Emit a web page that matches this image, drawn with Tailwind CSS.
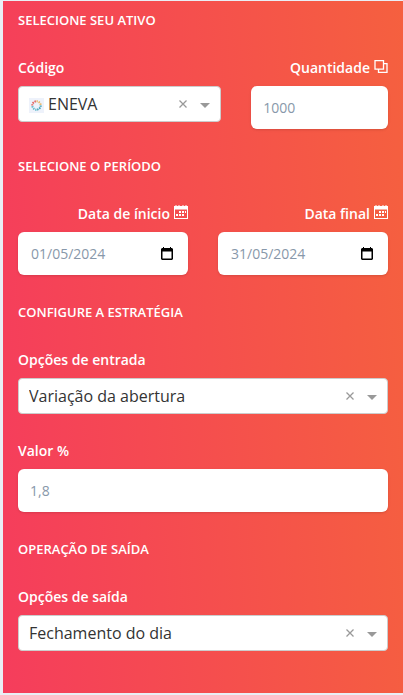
<!DOCTYPE html>
<html lang="pt-BR">
<head>
<meta charset="utf-8">
<meta name="viewport" content="width=device-width, initial-scale=1">
<title>Configuração da estratégia</title>
<script src="https://cdn.jsdelivr.net/npm/@tailwindcss/browser@4"></script>
</head>
<body class="bg-[#e9eef5] pl-[3px] pt-px font-['Open_Sans',sans-serif] text-sm">
<svg class="hidden">
  <symbol id="calendar" viewBox="0 0 14 14">
    <path fill="currentColor" fill-rule="evenodd" d="M0 1h1.500V0h1v1h2V0h1v1h3V0h1v1h2V0h1v1H14v13H0zM1 4.500V13h12V4.500zM5 6h2v2H5zM8 6h2v2H8zM11 6h1v2h-1zM2 9h2v2H2zM5 9h2v2H5zM8 9h2v2H8z"/>
  </symbol>
  <symbol id="picker" viewBox="0 0 12 13">
    <path fill="currentColor" fill-rule="evenodd" d="M1 1h1V0h1v1h6V0h1v1h1l1 1v10l-1 1H1l-1-1V2zM1.500 4.500v7h9v-7z"/>
  </symbol>
  <symbol id="clear" viewBox="0 0 8 8">
    <path stroke="currentColor" stroke-width="1.300" d="M.5.5l7 7M7.500.5l-7 7"/>
  </symbol>
  <symbol id="caret" viewBox="0 0 10 5">
    <path fill="currentColor" d="M0 0h10L5 5z"/>
  </symbol>
</svg>
<form class="bg-[linear-gradient(87deg,#f53d5c,#f5603f)] px-[15px] pt-[9px] pb-[42px] text-white">
  <section>
    <h2 class="text-[13px] leading-5 font-semibold">SELECIONE SEU ATIVO</h2>
    <div class="mt-[27px] -mx-[15px] flex">
      <div class="w-7/12 px-[15px]">
        <label for="codigo" class="block leading-[21px] font-semibold">Código</label>
        <div class="relative mt-2">
          <select id="codigo" class="block h-9 w-full appearance-none rounded-sm border border-[#ccc] bg-white pr-12 pl-[29px] text-base text-[#333]"><option>ENEVA</option></select>
          <svg class="pointer-events-none absolute top-3 left-[11px] size-[15px]" viewBox="0 0 15 15" fill="none" stroke-width="2" stroke-dasharray="1.3 .9">
            <path fill="#eef2fb" d="M0 0h15v15H0z"/>
            <path stroke="#ecb35c" d="M7.500 3.300A4.200 4.200 0 0 1 11.700 7.500"/>
            <path stroke="#3aa0b4" d="M11.700 7.500A4.200 4.200 0 0 1 7.500 11.700"/>
            <path stroke="#5cb8c8" d="M7.500 11.700A4.200 4.200 0 0 1 3.300 7.500"/>
            <path stroke="#e2605a" d="M3.300 7.500A4.200 4.200 0 0 1 7.500 3.300"/>
          </svg>
          <button type="button" aria-label="Limpar código" class="absolute top-[14px] right-[34px] text-[#999]"><svg class="size-2"><use href="#clear"/></svg></button>
          <svg class="pointer-events-none absolute top-[17px] right-[11px] h-[5px] w-[10px] text-[#999]"><use href="#caret"/></svg>
        </div>
      </div>
      <div class="w-5/12 px-[15px]">
        <label for="quantidade" class="flex justify-end gap-1 leading-[21px] font-semibold">Quantidade
          <svg class="mt-[3px] size-[14px]" viewBox="0 0 14 14" fill="none" stroke="currentColor" stroke-width="1.300"><path d="M1 .7h8.500v8.500H1zM9.500 3.700h3.500v8.600H4.500V9.200"/></svg>
        </label>
        <input id="quantidade" type="text" value="1000" class="mt-2 block h-[43px] w-full rounded-md bg-white px-3 text-[#8898aa] shadow-sm">
      </div>
    </div>
  </section>
  <section class="mt-[27px]">
    <h2 class="text-[13px] leading-5 font-semibold">SELECIONE O PERÍODO</h2>
    <div class="mt-[27px] grid grid-cols-2 gap-[30px]">
      <div>
        <label for="inicio" class="flex justify-end gap-1 leading-[21px] font-semibold">Data de ínicio
          <svg class="mt-[2px] size-[14px]"><use href="#calendar"/></svg>
        </label>
        <div class="relative mt-2">
          <input id="inicio" type="text" value="01/05/2024" class="block h-[43px] w-full rounded-md bg-white pr-10 pl-[13px] text-[#8898aa] shadow-sm">
          <button type="button" aria-label="Abrir calendário" class="absolute top-[15px] right-[15px] text-black"><svg class="h-[13px] w-3"><use href="#picker"/></svg></button>
        </div>
      </div>
      <div>
        <label for="final" class="flex justify-end gap-1 leading-[21px] font-semibold">Data final
          <svg class="mt-[2px] size-[14px]"><use href="#calendar"/></svg>
        </label>
        <div class="relative mt-2">
          <input id="final" type="text" value="31/05/2024" class="block h-[43px] w-full rounded-md bg-white pr-10 pl-[13px] text-[#8898aa] shadow-sm">
          <button type="button" aria-label="Abrir calendário" class="absolute top-[15px] right-[15px] text-black"><svg class="h-[13px] w-3"><use href="#picker"/></svg></button>
        </div>
      </div>
    </div>
  </section>
  <section class="mt-[27px]">
    <h2 class="text-[13px] leading-5 font-semibold">CONFIGURE A ESTRATÉGIA</h2>
    <label for="entrada" class="mt-[27px] block leading-[21px] font-semibold">Opções de entrada</label>
    <div class="relative mt-2">
      <select id="entrada" class="block h-9 w-full appearance-none rounded-sm border border-[#ccc] bg-white pr-12 pl-[10px] text-base text-[#333]"><option>Variação da abertura</option></select>
      <button type="button" aria-label="Limpar entrada" class="absolute top-[14px] right-[34px] text-[#999]"><svg class="size-2"><use href="#clear"/></svg></button>
      <svg class="pointer-events-none absolute top-[17px] right-[11px] h-[5px] w-[10px] text-[#999]"><use href="#caret"/></svg>
    </div>
    <label for="valor" class="mt-[26px] block leading-[21px] font-semibold">Valor %</label>
    <input id="valor" type="text" value="1,8" class="mt-2 block h-[43px] w-full rounded-md bg-white px-3 text-[#8898aa] shadow-sm">
  </section>
  <section class="mt-[27px]">
    <h2 class="text-[13px] leading-5 font-semibold">OPERAÇÃO DE SAÍDA</h2>
    <label for="saida" class="mt-[27px] block leading-[21px] font-semibold">Opções de saída</label>
    <div class="relative mt-2">
      <select id="saida" class="block h-9 w-full appearance-none rounded-sm border border-[#ccc] bg-white pr-12 pl-[10px] text-base text-[#333]"><option>Fechamento do dia</option></select>
      <button type="button" aria-label="Limpar saída" class="absolute top-[14px] right-[34px] text-[#999]"><svg class="size-2"><use href="#clear"/></svg></button>
      <svg class="pointer-events-none absolute top-[17px] right-[11px] h-[5px] w-[10px] text-[#999]"><use href="#caret"/></svg>
    </div>
  </section>
</form>
</body>
</html>
